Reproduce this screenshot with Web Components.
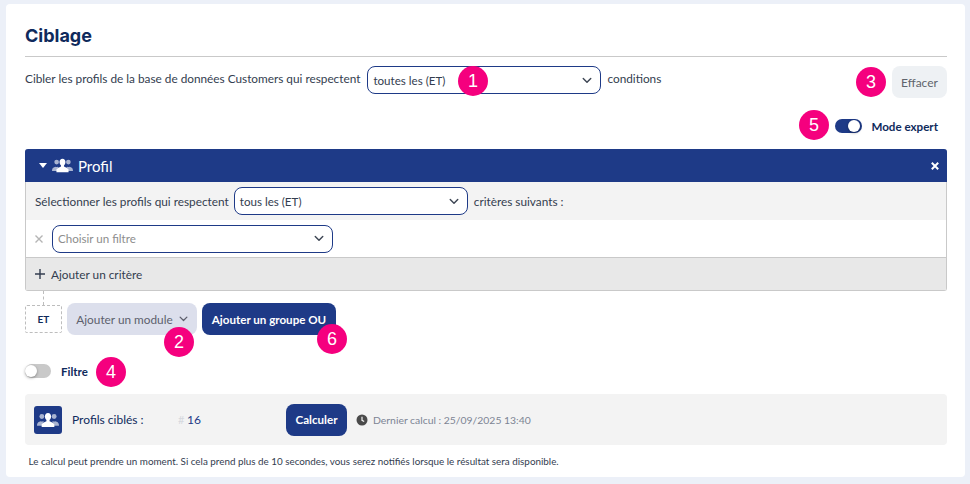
<!DOCTYPE html>
<html lang="fr">
<head>
<meta charset="utf-8">
<title>Ciblage</title>
<style>
html, body { margin: 0; height: 484px; overflow: hidden; }
body { background: #ecf0f8; font-family: Lato, "Liberation Sans", sans-serif; color: #0f2a5c; }
</style>
</head>
<body>
<targeting-card></targeting-card>

<template id="icon-people">
  <svg viewBox="0 0 34 24" width="100%" height="100%">
    <g fill="currentColor" opacity=".62">
      <circle cx="7.5" cy="6.5" r="3.8"/>
      <path d="M0 21c0-3.6 1-5.2 3.6-6.2l2-.9c.8.6 2.6.6 3.6 0l1.6.8-2.6 2.4V21z"/>
      <circle cx="26.5" cy="6.5" r="3.8"/>
      <path d="M34 21c0-3.6-1-5.2-3.6-6.2l-2-.9c-.8.6-2.6.6-3.6 0l-1.6.8 2.6 2.4V21z"/>
    </g>
    <path fill="currentColor" d="M17 1c3 0 4.8 2.4 4.8 5.5 0 2.3-1 4.3-2.4 5.4v1.9l5 2.3c1.7.8 2.4 1.8 2.4 3.4V23H7.2v-3.5c0-1.6.7-2.6 2.4-3.4l5-2.3v-1.9c-1.4-1.1-2.4-3.1-2.4-5.4C12.2 3.4 14 1 17 1z"/>
  </svg>
</template>

<script>
const chevron = `<svg viewBox="0 0 12 8" width="10" height="7" fill="none" stroke="currentColor" stroke-width="1.7" stroke-linecap="round" stroke-linejoin="round"><path d="M1.5 1.5 6 6l4.5-4.5"/></svg>`;

class StepBadge extends HTMLElement {
    constructor() {
        super();
        this.attachShadow({mode: 'open'});
        this.shadowRoot.innerHTML = `
        <style>
        :host {
            position: absolute;
            left: ${this.getAttribute('x')}px;
            top: ${this.getAttribute('y')}px;
            width: 30px;
            height: 30px;
            border-radius: 50%;
            background: #f5007e;
            color: #fff;
            font: 18px/30px "Liberation Sans", sans-serif;
            text-align: center;
            z-index: 2;
        }
        </style><slot></slot>`;
    }
}

class SelectBox extends HTMLElement {
    constructor() {
        super();
        this.attachShadow({mode: 'open'});
        const w = this.getAttribute('width');
        const placeholder = this.hasAttribute('placeholder');
        this.shadowRoot.innerHTML = `
        <style>
        :host {
            display: flex;
            align-items: center;
            justify-content: space-between;
            box-sizing: border-box;
            width: ${w}px;
            height: 28px;
            padding: 0 8px 0 5px;
            background: #fff;
            border: 1px solid #1e3a87;
            border-radius: 8px;
            font-size: 11.6px;
            color: ${placeholder ? '#8d8d8d' : '#333d4f'};
            flex: none;
        }
        svg { color: #3d4654; }
        </style><slot></slot>${chevron}`;
    }
}

class ToggleSwitch extends HTMLElement {
    constructor() {
        super();
        this.attachShadow({mode: 'open'});
        const on = this.hasAttribute('on');
        this.shadowRoot.innerHTML = `
        <style>
        :host {
            display: block;
            position: relative;
            flex: none;
            width: ${on ? 27 : 26}px;
            height: 14px;
            border-radius: 7px;
            background: ${on ? '#1e3a87' : '#c9c9c9'};
        }
        i {
            position: absolute;
            top: 1px;
            ${on ? 'right: 2px' : 'left: 0'};
            width: 12px;
            height: 12px;
            border-radius: 50%;
            background: #fff;
            box-shadow: 0 1px 3px rgba(0,0,0,.35);
        }
        </style><i></i>`;
    }
}

class ActionButton extends HTMLElement {
    constructor() {
        super();
        this.attachShadow({mode: 'open'});
        const kind = this.getAttribute('kind');
        const styles = {
            primary: 'background:#1e3a87;color:#fff;font-weight:700;font-size:11.6px;',
            soft: 'background:#dcdfec;color:#5d5f6c;font-size:11.8px;',
            ghost: 'background:#eef1f4;color:#5f646c;font-size:12px;'
        };
        this.shadowRoot.innerHTML = `
        <style>
        :host {
            display: inline-flex;
            align-items: center;
            justify-content: center;
            gap: 6px;
            box-sizing: border-box;
            flex: none;
            width: ${this.getAttribute('width')}px;
            height: 32px;
            border-radius: 8px;
            ${styles[kind]}
        }
        svg { width: 9px; height: 6px; }
        </style><slot></slot>${this.hasAttribute('caret') ? chevron : ''}`;
    }
}

class ProfilModule extends HTMLElement {
    constructor() {
        super();
        this.attachShadow({mode: 'open'});
        const people = document.getElementById('icon-people').innerHTML;
        this.shadowRoot.innerHTML = `
        <style>
        :host {
            display: block;
            height: 142px;
            box-sizing: border-box;
            border: 1px solid #c9c9c9;
            border-top: 0;
            border-radius: 3px;
            font-size: 11.8px;
            color: #333d4f;
        }
        header {
            display: flex;
            align-items: center;
            height: 33px;
            margin: 0 -1px;
            padding: 0 8px 0 14px;
            background: #1e3a87;
            border-radius: 3px 3px 0 0;
            color: #fff;
            font-size: 15px;
        }
        .caret { width: 0; height: 0; border: 4px solid transparent; border-top: 5px solid #fff; border-bottom: 0; margin-right: 5px; }
        .people { width: 21px; height: 15px; margin-right: 5px; }
        .close { margin-left: auto; width: 8px; height: 8px; }
        .row { display: flex; align-items: center; gap: 6px; padding: 0 9px; }
        .crit { height: 38px; background: #f3f3f3; }
        .crit select-box { margin-left: -1px; }
        .filter { height: 38px; box-sizing: border-box; border-bottom: 1px solid #c9c9c9; gap: 9px; }
        .x { width: 8px; height: 8px; color: #b5b5b5; flex: none; }
        .add { height: 32px; background: #e8e8e8; gap: 6px; }
        .plus { width: 10px; height: 10px; }
        </style>
        <header>
            <span class="caret"></span>
            <span class="people">${people}</span>
            Profil
            <svg class="close" viewBox="0 0 8 8" stroke="#fff" stroke-width="2"><path d="M.8.8l6.4 6.4M7.2.8.8 7.2"/></svg>
        </header>
        <div class="row crit">Sélectionner les profils qui respectent <select-box width="234">tous les (ET)</select-box> critères suivants :</div>
        <div class="row filter">
            <svg class="x" viewBox="0 0 8 8" stroke="currentColor" stroke-width="1.4"><path d="M.5.5l7 7M7.5.5l-7 7"/></svg>
            <select-box width="281" placeholder>Choisir un filtre</select-box>
        </div>
        <div class="row add">
            <svg class="plus" viewBox="0 0 10 10" stroke="#333d4f" stroke-width="1.4"><path d="M5 0v10M0 5h10"/></svg>
            Ajouter un critère
        </div>`;
    }
}

class ResultBar extends HTMLElement {
    constructor() {
        super();
        this.attachShadow({mode: 'open'});
        const people = document.getElementById('icon-people').innerHTML;
        this.shadowRoot.innerHTML = `
        <style>
        :host {
            display: flex;
            align-items: center;
            height: 51px;
            box-sizing: border-box;
            padding: 0 9px;
            background: #f3f3f3;
            border-radius: 4px;
            font-size: 12px;
            color: #0f2a5c;
        }
        .tile { display: flex; align-items: center; justify-content: center; width: 28px; height: 28px; border-radius: 3px; background: #1e3a87; color: #fff; margin-right: 10px; }
        .tile span { width: 22px; height: 16px; display: block; }
        .label { width: 106px; }
        .hash { color: #d5d8de; font-size: 11px; width: 9px; }
        .count { width: 99px; color: #1e3a87; }
        .clock { width: 12px; height: 12px; margin: 0 5px 0 9px; }
        .last { font-size: 10.4px; color: #7c8494; }
        </style>
        <div class="tile"><span>${people}</span></div>
        <span class="label">Profils ciblés :</span>
        <span class="hash">#</span>
        <span class="count">16</span>
        <action-button kind="primary" width="61">Calculer</action-button>
        <svg class="clock" viewBox="0 0 12 12"><circle cx="6" cy="6" r="5.5" fill="#4a4a4a"/><path d="M6 2.8V6.3l2.2 1.2" fill="none" stroke="#f3f3f3" stroke-width="1.2"/></svg>
        <span class="last">Dernier calcul : 25/09/2025 13:40</span>`;
    }
}

class TargetingCard extends HTMLElement {
    constructor() {
        super();
        this.attachShadow({mode: 'open'});
        this.shadowRoot.innerHTML = `
        <style>
        :host {
            display: block;
            position: relative;
            box-sizing: border-box;
            margin: 4px 5px 0 6px;
            width: 959px;
            height: 473px;
            padding: 0 18px 0 19px;
            background: #fff;
            border-radius: 4px;
            font-size: 11.8px;
            color: #333d4f;
        }
        h1 {
            margin: 0;
            height: 53px;
            box-sizing: border-box;
            padding-top: 21px;
            border-bottom: 1px solid #c9c9c9;
            font: 700 18px/22px Inter, "Liberation Sans", sans-serif;
            color: #0f2a5c;
        }
        .target { display: flex; align-items: flex-start; gap: 6px; margin-top: 9px; height: 32px; }
        .target span { line-height: 26px; }
        .target select-box { margin-left: 1px; }
        .target action-button { margin-left: auto; }
        .expert { display: flex; align-items: center; justify-content: flex-end; gap: 9px; height: 14px; margin: 21px 9px 16px 0; font-size: 11.6px; font-weight: 700; color: #0f2a5c; }
        .connector { position: absolute; left: 37px; top: 287px; height: 14px; border-left: 1px dashed #bdbdbd; }
        .actions { display: flex; gap: 5px; align-items: center; margin-top: 12px; }
        .et { box-sizing: border-box; width: 37px; height: 28px; display: flex; align-items: center; justify-content: center; border: 1px dashed #bdbdbd; border-radius: 2px; font-size: 10px; font-weight: 700; color: #0f2a5c; }
        .filtre { display: flex; align-items: center; gap: 10px; height: 14px; margin: 29px 0 16px; font-size: 11.5px; font-weight: 700; color: #0f2a5c; }
        .note { margin: 10px 0 0 3.5px; font-size: 9.85px; line-height: 12px; color: #333d4f; }
        </style>
        <h1>Ciblage</h1>
        <div class="target">
            <span>Cibler les profils de la base de données Customers qui respectent</span>
            <select-box width="234">toutes les (ET)</select-box>
            <span>conditions</span>
            <action-button kind="ghost" width="55">Effacer</action-button>
        </div>
        <div class="expert"><toggle-switch on></toggle-switch>Mode expert</div>
        <profil-module></profil-module>
        <div class="connector"></div>
        <div class="actions">
            <div class="et">ET</div>
            <action-button kind="soft" width="130" caret>Ajouter un module</action-button>
            <action-button kind="primary" width="134">Ajouter un groupe OU</action-button>
        </div>
        <div class="filtre"><toggle-switch></toggle-switch>Filtre</div>
        <result-bar></result-bar>
        <p class="note">Le calcul peut prendre un moment. Si cela prend plus de 10 secondes, vous serez notifiés lorsque le résultat sera disponible.</p>
        <step-badge x="452" y="62">1</step-badge>
        <step-badge x="158" y="323">2</step-badge>
        <step-badge x="850" y="63">3</step-badge>
        <step-badge x="90" y="353">4</step-badge>
        <step-badge x="793" y="106">5</step-badge>
        <step-badge x="311" y="320">6</step-badge>`;
    }
}

window.customElements.define('step-badge', StepBadge);
window.customElements.define('select-box', SelectBox);
window.customElements.define('toggle-switch', ToggleSwitch);
window.customElements.define('action-button', ActionButton);
window.customElements.define('profil-module', ProfilModule);
window.customElements.define('result-bar', ResultBar);
window.customElements.define('targeting-card', TargetingCard);
</script>
</body>
</html>
